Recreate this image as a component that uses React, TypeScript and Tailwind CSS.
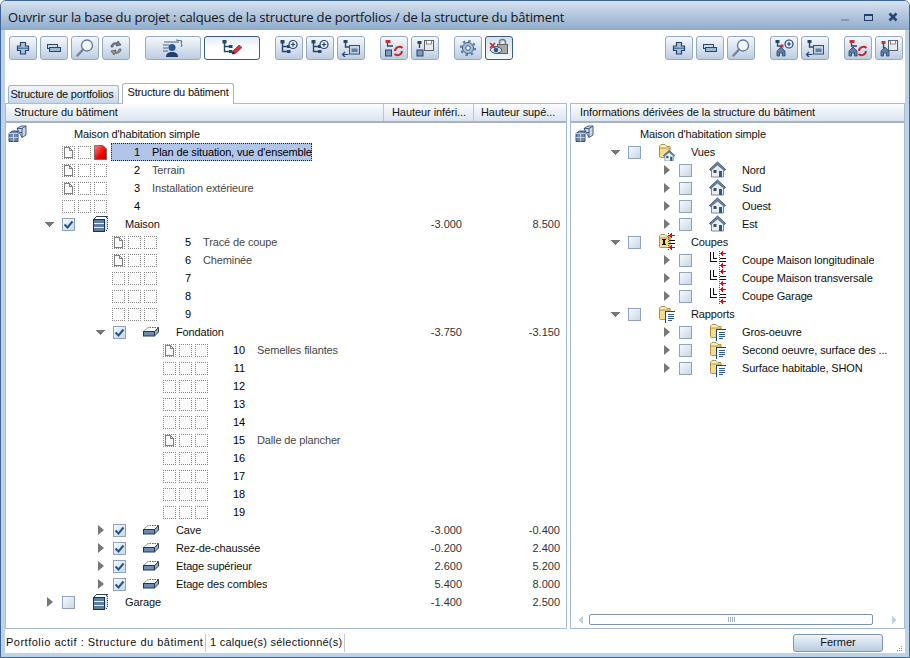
import React from "react";

const D = "#24466f";
const Svg = ({ w = 18, h = 18, children }: { w?: number; h?: number; children: React.ReactNode }) => (
  <svg width={w} height={h} viewBox={`0 0 ${w} ${h}`} className="block shrink-0" shapeRendering="crispEdges">{children}</svg>
);
const Smooth = ({ w = 18, h = 18, children }: { w?: number; h?: number; children: React.ReactNode }) => (
  <svg width={w} height={h} viewBox={`0 0 ${w} ${h}`} className="block shrink-0">{children}</svg>
);

/* ---- toolbar glyphs ---- */
const Plus = () => (
  <Smooth w={14} h={14}><path d="M4.500 1.500h5v3.500h3v4.500h-3v3.500h-5V9.500h-3V5h3z" fill="#a9c1dd" stroke={D} strokeWidth="1.200" /><path d="M2 7.200h10" stroke="#2f5688" strokeWidth="1" /></Smooth>
);
const Minus = () => (
  <Smooth w={14} h={10}><rect x=".5" y="1.500" width="10" height="4" fill="#cddced" stroke={D} /><rect x="2.500" y="4.500" width="11" height="4" fill="#9db8d6" stroke={D} /></Smooth>
);
const Loupe = () => (
  <Smooth w={20} h={20}><circle cx="12" cy="7.500" r="5.500" fill="#f4f8fc" stroke="#5f7896" strokeWidth="1.300" /><path d="M8 11.500 2.500 17.500" stroke="#6d84a0" strokeWidth="2.400" strokeLinecap="round" /></Smooth>
);
const Sync = () => (
  <Smooth><path d="M4 8c0-3 3-5 6-4l1-2 3 4-5 1 1-2c-2-.5-4 1-4 3z" fill="#6f8098" stroke="#3c4c62" strokeWidth=".7" /><path d="M14 10c0 3-3 5-6 4l-1 2-3-4 5-1-1 2c2 .5 4-1 4-3z" fill="#9a9a8e" stroke="#4b4b44" strokeWidth=".7" /></Smooth>
);
const People = () => (
  <Smooth w={24} h={20}><path d="M3 4h15M2 7h6M2 10h5M2 13h5M15 2l6 1-1 2 1 2-1 2" stroke="#4d6585" strokeWidth="1" fill="none" /><path d="M5 19c0-4 3-5 6-5s6 1 6 5z" fill="#1f3f6e" /><circle cx="11" cy="9.500" r="3.600" fill="#2b5a94" /></Smooth>
);
const TreeBase = ({ red = false }: { red?: boolean }) => (
  <g>
    <path d="M3.500 3v9.500H8M3.500 7.500H8" stroke={D} strokeWidth="1.400" fill="none" />
    <rect x="1.500" y="1" width="4" height="3.500" fill={red ? "#c8303a" : D} />
    <rect x="8" y="6" width="3.500" height="3" fill={D} />
    <rect x="8" y="11" width="3.500" height="3" fill={D} />
  </g>
);
const TreePencil = () => (
  <Smooth w={22} h={18}><TreeBase /><path d="M11 15l1-3 6-6 3 2.500-6.500 6z" fill="#d8323c" stroke="#7a1b20" strokeWidth=".6" /><path d="M11 15l1-3 2 2.400z" fill="#222" /></Smooth>
);
const TreePlus = () => (
  <Smooth w={20} h={18}><TreeBase /><circle cx="14" cy="5.500" r="4" fill="#e9f0f8" stroke={D} strokeWidth="1.200" /><path d="M11.800 5.500h4.400M14 3.300v4.400" stroke={D} strokeWidth="1.200" /></Smooth>
);
const TreePlusHouse = () => (
  <Smooth w={20} h={18}>
    <path d="M3.500 2v5H7" stroke={D} strokeWidth="1.300" fill="none" />
    <rect x="1.500" y="1" width="4" height="3" fill={D} />
    <rect x="6.500" y="5.500" width="3" height="3" fill="#c8303a" />
    <path d="M3 17v-5l4-4 4 4v5H8.500v-3h-3v3z" fill="#5f7ea6" stroke={D} strokeWidth=".8" />
    <circle cx="15" cy="5" r="4" fill="#e9f0f8" stroke={D} strokeWidth="1.200" />
    <path d="M12.800 5h4.400M15 2.800v4.400" stroke={D} strokeWidth="1.200" />
  </Smooth>
);
const TreeIn = () => (
  <Smooth w={20} h={18}><path d="M4.500 1v7h4" stroke={D} strokeWidth="1.400" fill="none" /><rect x="2.500" y="1" width="4" height="3" fill={D} /><rect x="8.500" y="6.500" width="10" height="8.500" fill="#c4d3e4" stroke="#3f4f63" /><rect x="10.500" y="9.500" width="6" height="3.500" fill="#5f7ea6" /><path d="M7.500 15.500H1.500m2.500-2.500-2.500 2.500L4 18" stroke={D} strokeWidth="1.200" fill="none" /></Smooth>
);
const TreeSync = ({ house = false }: { house?: boolean }) => (
  <Smooth w={20} h={18}>
    <path d="M3.500 2v5H9" stroke={D} strokeWidth="1.300" fill="none" />
    <rect x="1.500" y="1" width="5" height="3" fill="#c8303a" />
    {house ? <path d="M1 17v-5l4-4 4 4v5H6.500v-3h-3v3z" fill="#5f7ea6" stroke={D} strokeWidth=".8" /> : <rect x="1.500" y="11" width="6" height="6" fill="#7f99ba" stroke={D} />}
    <path d="M11 12a4.500 4.500 0 0 1 7.500-3M18 12a4.500 4.500 0 0 1-7.500 3" stroke="#d0202c" strokeWidth="2" fill="none" />
  </Smooth>
);
const TreeSave = ({ house = false }: { house?: boolean }) => (
  <Smooth w={20} h={18}>
    <rect x="9.500" y="1.500" width="9" height="10" fill="#e8eaee" stroke="#5b5f66" />
    <rect x="11.500" y="1.500" width="5" height="3.500" fill="#fff" stroke="#5b5f66" strokeWidth=".7" />
    <path d="M4.500 3v6" stroke={D} strokeWidth="1.300" />
    <rect x="2.500" y="2" width="4" height="3" fill={house ? "#c8303a" : D} />
    {house ? <path d="M2 17v-5l4-4 4 4v5H7.500v-3h-3v3z" fill="#5f7ea6" stroke={D} strokeWidth=".8" /> : <rect x="2" y="11" width="6" height="6" fill="#7f99ba" stroke={D} />}
  </Smooth>
);
const Gear = () => (
  <Smooth><circle cx="9" cy="9" r="5.500" fill="#a9bfd8" stroke="#3f5f8a" strokeWidth="1" /><circle cx="9" cy="9" r="7" fill="none" stroke="#5f7ea6" strokeWidth="2.200" strokeDasharray="2.500 3" /><circle cx="9" cy="9" r="2.300" fill="#eef3f9" stroke="#3f5f8a" /></Smooth>
);
const EyeLock = () => (
  <Smooth w={22} h={20}>
    <rect x="9.500" y="6.500" width="10" height="9" fill="#a8a8a4" stroke="#5f5f5c" />
    <path d="M11.500 6.500V4.500a3 3 0 0 1 6 0v2" stroke="#77777a" strokeWidth="1.500" fill="none" />
    <path d="M2 12c3-4.500 9-4.500 12 0-3 4.500-9 4.500-12 0z" fill="#dfe8f2" stroke={D} />
    <circle cx="8" cy="12" r="2.300" fill="#2b5a94" />
    <path d="M2 5l5 5M7 5l-5 5" stroke="#c8202c" strokeWidth="1.500" />
  </Smooth>
);

/* ---- tree glyphs ---- */
const Stack = () => (
  <Smooth w={19} h={18}>
    <path d="M9 3.500 13 1h5v9l-4 2.500z" fill="#c9d6e6" stroke="#35527c" strokeWidth=".9" />
    <path d="M9 3.500h5V12.500M14 3.500 18 1M11.500 7.500h2.500" stroke="#35527c" strokeWidth=".9" fill="none" />
    <path d="M1 8.500 4.500 6H10v10.500H1z" fill="#6d8bb0" stroke="#2b4468" strokeWidth=".9" />
    <path d="M1 8.500h9M5.500 8.500v8M1 12.500h9" stroke="#d5e0ed" strokeWidth=".8" />
  </Smooth>
);
const Building = () => (
  <Svg w={17} h={18}>
    <path d="M1.500 4.500 4.500 1.500h11" fill="none" stroke="#2a4060" />
    <path d="M12.500 4.500 15.500 1.500V14L12.500 17" fill="#dbe3ed" stroke="#2a4060" strokeDasharray="1 1" />
    <rect x="1.500" y="4.500" width="11" height="12" fill="#e9eef5" stroke="#1a2f4e" />
    <rect x="2" y="5" width="10" height="3" fill="#5f7ea3" />
    <rect x="2" y="9" width="10" height="3" fill="#5f7ea3" />
    <rect x="2" y="13" width="10" height="3" fill="#5f7ea3" />
  </Svg>
);
const Slab = () => (
  <Smooth w={16} h={14}>
    <path d="M.5 6.500 5 2.500h10.500l-4 4z" fill="#fff" stroke="#39506f" strokeWidth=".9" strokeDasharray="1.500 1" />
    <rect x=".5" y="6.500" width="11" height="4.500" fill="#6d8bb0" stroke="#1f3555" />
    <path d="M11.500 11l4-4V2.500l-4 4z" fill="#91a9c6" stroke="#1f3555" strokeWidth=".9" />
  </Smooth>
);
const Folder = () => (
  <g>
    <path d="M1.500 5V3l1.500-1.500h4L9 3.500h3v3H1.500z" fill="#fbeec0" stroke="#a78a3c" strokeWidth=".9" />
    <rect x="1.500" y="5" width="10.500" height="9.500" rx="1" fill="#f7dc8c" stroke="#a78a3c" strokeWidth=".9" />
  </g>
);
const HouseShape = () => (
  <g>
    <path d="M.5 8.500 8.500 1l8 7.500-1.500 1L8.500 3.500 2 9.500z" fill="#7390b4" stroke="#2c4766" strokeWidth=".9" />
    <path d="M2.500 9 8.500 4l6 5v7h-12z" fill="#e8eef5" stroke="#5a6f88" strokeWidth=".8" />
    <rect x="4.500" y="9" width="3" height="3" fill="#404c5c" />
    <rect x="10" y="10" width="3" height="6" fill="#2b5a94" />
  </g>
);
const House = () => <Smooth w={18} h={18}><HouseShape /></Smooth>;
const FolderHouse = () => (
  <Smooth w={18} h={18}>
    <Folder />
    <g transform="translate(5 6.500) scale(.72)"><HouseShape /></g>
  </Smooth>
);
/* section mark: red dotted axis, red arrows top and bottom, black bars between */
const SectionMark = () => (
  <g shapeRendering="crispEdges">
    <path d="M10.500 0v18" stroke="#e01420" strokeDasharray="1 1" />
    <path d="M12 2h5v1h-5zM12 14h5v1h-5z" fill="#f00010" />
    <path d="M11 2.500l3-2.500v5zM11 14.500l3-2.500v5z" fill="#f00010" />
    <path d="M11 7h6v1h-6zM11 10h6v1h-6z" fill="#111" />
  </g>
);
const FolderCut = () => (
  <Smooth w={18} h={18}>
    <Folder />
    <path d="M4 6.500h4M6 6.500v5M4 11.500h4" stroke="#111" strokeWidth="1.200" fill="none" shapeRendering="crispEdges" />
    <SectionMark />
  </Smooth>
);
const Cut = () => (
  <Smooth w={18} h={18}>
    <path d="M1.500 1v9H7.500M4.500 1v6H7.500" stroke="#111" strokeWidth="1" fill="none" shapeRendering="crispEdges" />
    <SectionMark />
  </Smooth>
);
const FolderReport = () => (
  <Smooth w={18} h={18}>
    <Folder />
    <g shapeRendering="crispEdges">
      <rect x="7" y="6" width="10" height="12" fill="#fff" />
      <path d="M7.500 6v12M7.500 6.500H16.500" stroke="#1a4680" fill="none" />
      <path d="M10 9h6v1h-6zM10 11h6v1h-6zM10 13h6v1h-6zM10 15h4v1h-4z" fill="#2a5c9c" />
    </g>
  </Smooth>
);

const PageGlyph = () => (
  <Svg w={11} h={11}>
    <path d="M1.500.5h5l3 3v7h-8z M6.500.5v3h3" fill="#fff" stroke="#808080" />
  </Svg>
);

const RedPage = () => (
  <div className="w-[13px] h-[15px] mr-[3px] shrink-0">
    <Smooth w={13} h={15}>
      <defs>
        <linearGradient id="rp" x1="0" y1="0" x2="1" y2="1">
          <stop offset="0" stopColor="#ff8080" />
          <stop offset=".6" stopColor="#f00000" />
          <stop offset="1" stopColor="#c00000" />
        </linearGradient>
      </defs>
      <path d="M.5.5h8.500l3.500 3.500v10.500H.5z" fill="url(#rp)" stroke="#555" strokeWidth=".7" />
    </Smooth>
  </div>
);

const LBox = ({ doc }: { doc?: boolean }) => (
  <div className="w-[13px] h-[13px] mr-[3px] shrink-0 border border-dotted border-[#888] flex items-center justify-center bg-white">
    {doc && <PageGlyph />}
  </div>
);

const Down = () => (
  <div className="w-[9px] flex justify-center shrink-0">
    <Svg w={9} h={5}><path d="M0 0h9L4.500 5z" fill="#777" /></Svg>
  </div>
);
const Right = () => (
  <div className="w-[9px] flex justify-center shrink-0">
    <Smooth w={6} h={10}><path d="M0 0l6 5-6 5z" fill="#777" /></Smooth>
  </div>
);

const Check = ({ on }: { on?: boolean }) => (
  <div className="w-[13px] h-[13px] shrink-0 border border-[#90a4bd] bg-gradient-to-br from-[#f7f9fc] to-[#c9d7e8] flex items-center justify-center">
    {on && (
      <Smooth w={11} h={11}><path d="M1.500 5.500 4.500 8.500 9.500 2.500" fill="none" stroke="#24558f" strokeWidth="2" /></Smooth>
    )}
  </div>
);

type LayerProps = { pad: string; numW: string; n: number; label?: string; doc?: boolean; red?: boolean; sel?: boolean };
const Layer = ({ pad, numW, n, label, doc, red, sel }: LayerProps) => (
  <div className={`h-[18px] flex items-center ${pad}`}>
    <LBox doc={doc} />
    <LBox />
    {red ? <RedPage /> : <LBox />}
    <div className={sel ? "h-[18px] flex items-center w-[201px] bg-[#b1c5e8] border border-dotted border-[#222] ml-px text-black" : "flex items-center"}>
      <span className={`${numW} text-right text-black shrink-0`}>{n}</span>
      {label && <span className={`ml-[12px] whitespace-nowrap ${sel ? "text-black" : "text-[#474747]"}`}>{label}</span>}
    </div>
  </div>
);

type GroupProps = { pad: string; open?: boolean; on?: boolean; icon: React.ReactNode; label: string; a?: string; b?: string };
const Group = ({ pad, open, on, icon, label, a, b }: GroupProps) => (
  <div className={`h-[18px] flex items-center ${pad}`}>
    {open ? <Down /> : <Right />}
    <div className="w-[8px] shrink-0" />
    <Check on={on} />
    <div className="w-[17px] shrink-0" />
    <div className="w-[16px] shrink-0 flex justify-start">{icon}</div>
    <div className="w-[17px] shrink-0" />
    <span className="whitespace-nowrap truncate">{label}</span>
    {a && (
      <div className="ml-auto flex pr-[6px] text-[#333] tracking-normal">
        <span className="w-[98px] text-right">{a}</span>
        <span className="w-[98px] text-right">{b}</span>
      </div>
    )}
  </div>
);

const RChild = ({ icon, label }: { icon: React.ReactNode; label: string }) => (
  <Group pad="pl-[91px] pr-[11px]" icon={icon} label={label} />
);
const RHead = ({ icon, label }: { icon: React.ReactNode; label: string }) => (
  <Group pad="pl-[40px]" open icon={icon} label={label} />
);

const Btn = ({ wide, pressed, soft, children }: { wide?: boolean; pressed?: boolean; soft?: boolean; children: React.ReactNode }) => (
  <div
    className={`${wide ? "w-[56px]" : "w-[28px]"} h-[24px] shrink-0 rounded-[3px] border flex items-center justify-center ${
      pressed
        ? "border-[#3c5a82] bg-gradient-to-b from-[#e3ebf4] via-[#ffffff] to-[#ffffff]"
        : soft
          ? "border-[#3c5a82] bg-gradient-to-b from-[#d5e0ec] to-[#f3f6fa]"
          : "border-[#94a9c3] bg-gradient-to-b from-[#f5f8fb] to-[#bccde1]"
    }`}
  >
    {children}
  </div>
);

const Gr = ({ children }: { children: React.ReactNode }) => <div className="flex gap-[3px]">{children}</div>;

const HeadCell = ({ className, children }: { className: string; children: React.ReactNode }) => (
  <div className={`h-full flex items-center border-r border-[#b9c6d6] tracking-[-0.07px] whitespace-nowrap ${className}`}>{children}</div>
);

export default function App() {
  return (
    <div className="w-[910px] h-[658px] flex flex-col border border-[#3f6496] rounded-t-[6px] overflow-hidden text-[11px] leading-none text-[#111] font-['Liberation_Sans',sans-serif] bg-white">
      {/* title bar */}
      <div className="h-[29px] shrink-0 flex items-center pt-[3px] pl-[7px] pr-[11px] bg-gradient-to-b from-[#d6e2ef] to-[#8fabcb]">
        <span className="text-[13px] text-[#10151c] font-['Open_Sans',sans-serif] tracking-[-0.16px] whitespace-nowrap">
          Ouvrir sur la base du projet : calques de la structure de portfolios / de la structure du bâtiment
        </span>
        <div className="ml-auto flex items-center gap-[15px]">
          <div className="w-[8px] h-[2px] mt-[6px] bg-[#8797ab]" />
          <div className="w-[9px] h-[7px] border border-[#1f3f6e] border-t-[2px]" />
          <Smooth w={10} h={10}><path d="M1.500 1.500l7 7M8.500 1.500l-7 7" stroke="#26476f" strokeWidth="2.600" /></Smooth>
        </div>
      </div>

      <div className="flex-1 min-h-0 flex flex-col border-x-4 border-b-4 border-[#bdd1e7] bg-white">
        {/* toolbar */}
        <div className="h-[30px] shrink-0 pt-[6px] pl-[4px] pr-[2px] flex gap-[15px]">
          <Gr>
            <Btn><Plus /></Btn>
            <Btn><Minus /></Btn>
            <Btn><Loupe /></Btn>
            <Btn><Sync /></Btn>
          </Gr>
          <Gr>
            <Btn wide><People /></Btn>
            <Btn wide pressed><TreePencil /></Btn>
          </Gr>
          <Gr>
            <Btn><TreePlus /></Btn>
            <Btn><TreePlus /></Btn>
            <Btn><TreeIn /></Btn>
          </Gr>
          <Gr>
            <Btn><TreeSync /></Btn>
            <Btn><TreeSave /></Btn>
          </Gr>
          <Gr>
            <Btn><Gear /></Btn>
            <Btn soft><EyeLock /></Btn>
          </Gr>
          <div className="ml-auto flex gap-[15px]">
            <Gr>
              <Btn><Plus /></Btn>
              <Btn><Minus /></Btn>
              <Btn><Loupe /></Btn>
            </Gr>
            <Gr>
              <Btn><TreePlusHouse /></Btn>
              <Btn><TreeIn /></Btn>
            </Gr>
            <Gr>
              <Btn><TreeSync house /></Btn>
              <Btn><TreeSave house /></Btn>
            </Gr>
          </div>
        </div>

        {/* tabs */}
        <div className="h-[20px] mt-[23px] shrink-0 pl-[3px] flex items-end gap-[3px] tracking-[-0.2px]">
          <div className="w-[111px] h-[18px] border border-b-0 border-[#a3b4c9] rounded-t-[3px] bg-gradient-to-b from-[#f3f6fa] to-[#c5d6e9] flex items-center justify-center whitespace-nowrap pr-[3px]">
            Structure de portfolios
          </div>
          <div className="relative z-10 w-[112px] h-[21px] -mb-px border border-b-0 border-[#a3b4c9] rounded-t-[3px] bg-white flex items-center justify-center whitespace-nowrap pb-[3px]">
            Structure du bâtiment
          </div>
        </div>

        {/* panes */}
        <div className="flex-1 min-h-0 flex gap-[3px]">
          <div className="w-[562px] border border-[#a9bcd6] flex flex-col">
            <div className="h-[19px] shrink-0 flex bg-gradient-to-b from-[#fbfcfe] to-[#dbe4ef] border-b-2 border-[#a8b4c2]">
              <HeadCell className="w-[378px] pl-[8px]">Structure du bâtiment</HeadCell>
              <HeadCell className="w-[90px] pl-[8px]">Hauteur inféri...</HeadCell>
              <HeadCell className="flex-1 pl-[7px] border-r-0">Hauteur supé...</HeadCell>
            </div>
            <div className="flex-1 pt-[2px] tracking-[-0.13px]">
              <div className="h-[18px] flex items-center pl-[2px]">
                <Stack />
                <span className="ml-[47px] whitespace-nowrap">Maison d'habitation simple</span>
              </div>
              <Layer pad="pl-[56px]" numW="w-[28px]" n={1} label="Plan de situation, vue d'ensemble" doc red sel />
              <Layer pad="pl-[56px]" numW="w-[30px]" n={2} label="Terrain" doc />
              <Layer pad="pl-[56px]" numW="w-[30px]" n={3} label="Installation extérieure" doc />
              <Layer pad="pl-[56px]" numW="w-[30px]" n={4} />
              <Group pad="pl-[39px]" open on icon={<Building />} label="Maison" a="-3.000" b="8.500" />
              <Layer pad="pl-[106px]" numW="w-[31px]" n={5} label="Tracé de coupe" doc />
              <Layer pad="pl-[106px]" numW="w-[31px]" n={6} label="Cheminée" doc />
              <Layer pad="pl-[106px]" numW="w-[31px]" n={7} />
              <Layer pad="pl-[106px]" numW="w-[31px]" n={8} />
              <Layer pad="pl-[106px]" numW="w-[31px]" n={9} />
              <Group pad="pl-[90px]" open on icon={<Slab />} label="Fondation" a="-3.750" b="-3.150" />
              <Layer pad="pl-[157px]" numW="w-[34px]" n={10} label="Semelles filantes" doc />
              <Layer pad="pl-[157px]" numW="w-[34px]" n={11} />
              <Layer pad="pl-[157px]" numW="w-[34px]" n={12} />
              <Layer pad="pl-[157px]" numW="w-[34px]" n={13} />
              <Layer pad="pl-[157px]" numW="w-[34px]" n={14} />
              <Layer pad="pl-[157px]" numW="w-[34px]" n={15} label="Dalle de plancher" doc />
              <Layer pad="pl-[157px]" numW="w-[34px]" n={16} />
              <Layer pad="pl-[157px]" numW="w-[34px]" n={17} />
              <Layer pad="pl-[157px]" numW="w-[34px]" n={18} />
              <Layer pad="pl-[157px]" numW="w-[34px]" n={19} />
              <Group pad="pl-[90px]" on icon={<Slab />} label="Cave" a="-3.000" b="-0.400" />
              <Group pad="pl-[90px]" on icon={<Slab />} label="Rez-de-chaussée" a="-0.200" b="2.400" />
              <Group pad="pl-[90px]" on icon={<Slab />} label="Etage supérieur" a="2.600" b="5.200" />
              <Group pad="pl-[90px]" on icon={<Slab />} label="Etage des combles" a="5.400" b="8.000" />
              <Group pad="pl-[39px]" icon={<Building />} label="Garage" a="-1.400" b="2.500" />
            </div>
          </div>

          <div className="w-[335px] border border-[#a9bcd6] flex flex-col">
            <div className="h-[19px] shrink-0 flex items-center pl-[9px] bg-gradient-to-b from-[#fbfcfe] to-[#dbe4ef] border-b-2 border-[#a8b4c2] tracking-[-0.07px] whitespace-nowrap">
              Informations dérivées de la structure du bâtiment
            </div>
            <div className="flex-1 min-h-0 pt-[2px] tracking-[-0.13px]">
              <div className="h-[18px] flex items-center pl-[4px]">
                <Stack />
                <span className="ml-[46px] whitespace-nowrap">Maison d'habitation simple</span>
              </div>
              <RHead icon={<FolderHouse />} label="Vues" />
              <RChild icon={<House />} label="Nord" />
              <RChild icon={<House />} label="Sud" />
              <RChild icon={<House />} label="Ouest" />
              <RChild icon={<House />} label="Est" />
              <RHead icon={<FolderCut />} label="Coupes" />
              <RChild icon={<Cut />} label="Coupe Maison longitudinale" />
              <RChild icon={<Cut />} label="Coupe Maison transversale" />
              <RChild icon={<Cut />} label="Coupe Garage" />
              <RHead icon={<FolderReport />} label="Rapports" />
              <RChild icon={<FolderReport />} label="Gros-oeuvre" />
              <RChild icon={<FolderReport />} label="Second oeuvre, surface des ..." />
              <RChild icon={<FolderReport />} label="Surface habitable, SHON" />
            </div>
            {/* scrollbar */}
            <div className="h-[11px] mb-[3px] shrink-0 flex items-center pl-[7px]">
              <Svg w={5} h={8}><path d="M5 0v8L0 4z" fill="#c3d0df" /></Svg>
              <div className="ml-[6px] w-[284px] h-[11px] rounded-[2px] border border-[#8093ac] bg-white flex items-center justify-center gap-px">
                <div className="w-px h-[5px] bg-[#a3b1c3]" />
                <div className="w-px h-[5px] bg-[#a3b1c3]" />
                <div className="w-px h-[5px] bg-[#a3b1c3]" />
                <div className="w-px h-[5px] bg-[#a3b1c3]" />
              </div>
              <div className="ml-[19px]"><Svg w={5} h={8}><path d="M0 0v8l5-4z" fill="#c3d0df" /></Svg></div>
            </div>
          </div>
        </div>

        {/* status bar */}
        <div className="h-[24px] shrink-0 flex items-center">
          <div className="w-[201px] h-[18px] mt-[3px] pl-[1px] flex items-center border-r border-[#c3c9d0] whitespace-nowrap tracking-[0.5px]">Portfolio actif : Structure du bâtiment</div>
          <div className="w-[139px] h-[18px] mt-[3px] pl-[4px] flex items-center border-r border-[#c3c9d0] whitespace-nowrap tracking-[0.25px]">1 calque(s) sélectionné(s)</div>
          <div className="ml-auto mr-[13px] w-[90px] h-[18px] mt-[3px] rounded-[3px] border border-[#7f97b5] bg-gradient-to-b from-[#eff3f8] to-[#b9cce2] flex items-center justify-center">Fermer</div>
          <div className="self-end mb-px mr-[2px]">
            <Svg w={7} h={7}><path d="M5 1h1v1H5zM3 3h1v1H3zM5 3h1v1H5zM1 5h1v1H1zM3 5h1v1H3zM5 5h1v1H5z" fill="#8a97a6" /></Svg>
          </div>
        </div>
      </div>
    </div>
  );
}
